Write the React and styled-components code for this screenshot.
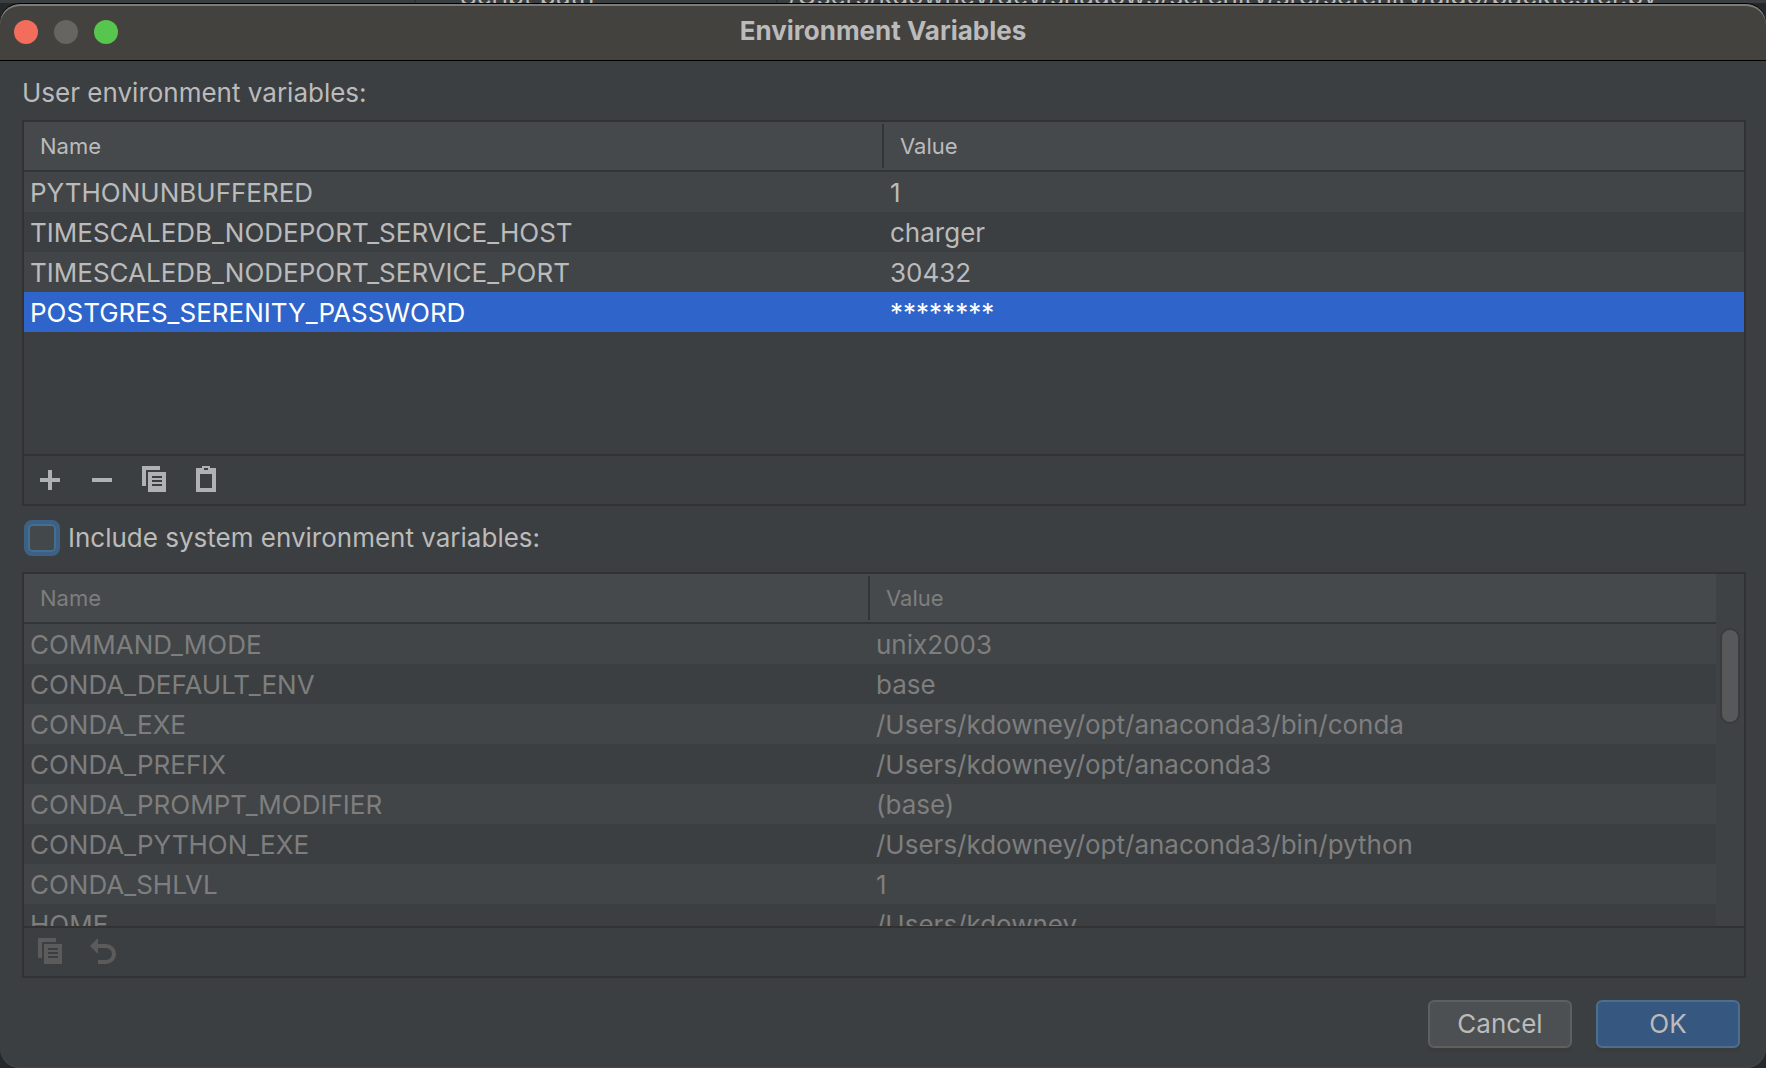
import React, { useState } from "react";
import styled, { createGlobalStyle, css } from "styled-components";

const GlobalStyle = createGlobalStyle`
  *, *::before, *::after { box-sizing: border-box; }
  html, body { margin: 0; background: #26292b; }
  body {
    font-family: Inter, "Liberation Sans", sans-serif;
    font-size: 26px;
    line-height: 40px;
    color: #bbbbbb;
    overflow: hidden;
  }
`;

const Screen = styled.div`
  height: 100vh;
  display: flex;
  flex-direction: column;
`;

const Backdrop = styled.div`
  flex: none;
  height: 3px;
  overflow: hidden;
  display: grid;
  grid-template-columns: 414px 46px 316px 1fr;
  align-content: end;
  background: #3a3e41;
`;

const BackdropCell = styled.span`
  line-height: 14px;
  padding-left: ${(p) => p.$indent || 0}px;
  border-left: ${(p) => (p.$ruled ? "2px solid #313335" : "none")};
  white-space: nowrap;
`;

const Dialog = styled.main`
  flex: 1;
  min-height: 0;
  display: flex;
  flex-direction: column;
  overflow: hidden;
  border-radius: 20px;
  border-top: 1px solid #000000;
  box-shadow: inset 0 -1px 0 #4c4648;
  background: #3c3f41;
`;

const TitleBar = styled.header`
  flex: none;
  height: 57px;
  display: grid;
  grid-template-columns: 1fr auto 1fr;
  align-items: center;
  padding: 0 14px;
  border-bottom: 1px solid #000000;
  border-radius: 20px 20px 0 0;
  box-shadow: inset 0 2px 0 #7b7c78;
  background: #43423f;
`;

const Lights = styled.div`
  display: flex;
  gap: 16px;
`;

const Light = styled.button`
  width: 24px;
  height: 24px;
  padding: 0;
  border: 0;
  border-radius: 50%;
  background: ${(p) => p.$color};
`;

const Title = styled.h1`
  margin: 0;
  padding-bottom: 2px;
  font-size: 26px;
  font-weight: 700;
  line-height: 40px;
`;

const Content = styled.div`
  flex: 1;
  min-height: 0;
  display: flex;
  flex-direction: column;
  padding: 12px 20px 20px 22px;
`;

const SectionLabel = styled.h2`
  margin: 0 0 7px;
  font-size: 26px;
  font-weight: 400;
  line-height: 40px;
`;

const Panel = styled.section`
  display: flex;
  flex-direction: column;
  border: 2px solid #323232;
  ${(p) =>
    p.$grow
      ? css`
          flex: 1;
          min-height: 0;
        `
      : css`
          flex: none;
        `}
  color: ${(p) => (p.$muted ? "#7e7e7e" : "#bbbbbb")};
`;

const TableArea = styled.div`
  display: flex;
  min-height: ${(p) => p.$minHeight || 0}px;
  flex: 1;
`;

const Scroller = styled.div`
  flex: 1;
  overflow-y: auto;
  scrollbar-width: none;
`;

const Table = styled.table`
  width: 100%;
  table-layout: fixed;
  border-collapse: separate;
  border-spacing: 0;
`;

const HeadCell = styled.th`
  position: sticky;
  top: 0;
  height: 50px;
  padding: 2px 0;
  border-bottom: 2px solid #313537;
  background: #45494b;
  font-size: 22px;
  font-weight: 400;
  line-height: 44px;
  text-align: left;
`;

const HeadText = styled.span`
  display: block;
  padding-left: 16px;
  border-right: ${(p) => (p.$divided ? "2px solid #313537" : "none")};
`;

const Row = styled.tr`
  background: ${(p) => (p.$selected ? "#2f65ca" : "#3c3f41")};
  color: ${(p) => (p.$selected ? "#ffffff" : "inherit")};

  &:nth-child(odd) {
    background: #414547;
  }
`;

const Cell = styled.td`
  height: 40px;
  padding: 2px 6px 0;
  line-height: 38px;
  white-space: nowrap;
  overflow: hidden;
`;

const Track = styled.div`
  flex: none;
  width: 28px;
  padding: 54px 4px 0;
  background: #3f4244;
`;

const Thumb = styled.div`
  height: 96px;
  border: 2px solid #393b3d;
  border-radius: 10px;
  background: #575859;
`;

const Toolbar = styled.div`
  flex: none;
  display: flex;
  align-items: center;
  gap: 20px;
  height: 50px;
  padding: 0 10px;
  border-top: 2px solid #323232;
`;

const ToolButton = styled.button`
  width: 32px;
  height: 32px;
  padding: 0;
  border: 0;
  background: none;
  color: #afb1b3;

  &:disabled {
    color: #5b5b5b;
  }

  svg {
    display: block;
  }
`;

const CheckRow = styled.label`
  flex: none;
  display: flex;
  align-items: center;
  gap: 8px;
  padding: 12px 2px 14px;
  align-self: flex-start;
`;

const CheckBox = styled.input`
  appearance: none;
  width: 36px;
  height: 36px;
  margin: 0;
  border: 4px solid #3d6185;
  border-radius: 8px;
  box-shadow: inset 0 0 0 2px #466d94;
  background: #43494a;

  &:checked {
    background: #43494a linear-gradient(#bbbbbb, #bbbbbb) center / 14px 14px no-repeat;
  }
`;

const Actions = styled.footer`
  flex: none;
  display: flex;
  justify-content: flex-end;
  gap: 24px;
  padding: 22px 6px 0;
`;

const ActionButton = styled.button`
  width: 144px;
  height: 48px;
  padding: 0;
  border: 2px solid ${(p) => (p.$primary ? "#4c708c" : "#5e6060")};
  border-radius: 6px;
  box-shadow: 0 4px 0 #393b3d;
  background: ${(p) => (p.$primary ? "#365880" : "#4c5052")};
  color: #bbbbbb;
  font: inherit;
`;

const AddIcon = () => (
  <svg width="32" height="32" viewBox="0 0 32 32" fill="currentColor" aria-hidden="true">
    <path d="M14 6h4v8h8v4h-8v8h-4v-8H6v-4h8z" />
  </svg>
);

const RemoveIcon = () => (
  <svg width="32" height="32" viewBox="0 0 32 32" fill="currentColor" aria-hidden="true">
    <path d="M6 14h20v4H6z" />
  </svg>
);

const CopyIcon = () => (
  <svg width="32" height="32" viewBox="0 0 32 32" fill="currentColor" fillRule="evenodd" aria-hidden="true">
    <path d="M4 2h18v4H8v16H4z" />
    <path d="M10 8h18v20H10zM14 12v2h10v-2zM14 16v2h10v-2zM14 20v2h10v-2z" />
  </svg>
);

const PasteIcon = () => (
  <svg width="32" height="32" viewBox="0 0 32 32" fill="currentColor" fillRule="evenodd" aria-hidden="true">
    <path d="M12 2h8v2h6v24H6V4h6zM14 4v2h4V4zM10 10v14h12V10z" />
  </svg>
);

const UndoIcon = () => (
  <svg width="32" height="32" viewBox="0 0 32 32" aria-hidden="true">
    <path d="M4 10l8-8v16z" fill="currentColor" />
    <path d="M12 10h8a8 8 0 0 1 0 16h-8" fill="none" stroke="currentColor" strokeWidth="4" />
  </svg>
);

const userVariables = [
  ["PYTHONUNBUFFERED", "1"],
  ["TIMESCALEDB_NODEPORT_SERVICE_HOST", "charger"],
  ["TIMESCALEDB_NODEPORT_SERVICE_PORT", "30432"],
  ["POSTGRES_SERENITY_PASSWORD", "********"],
];

const systemVariables = [
  ["COMMAND_MODE", "unix2003"],
  ["CONDA_DEFAULT_ENV", "base"],
  ["CONDA_EXE", "/Users/kdowney/opt/anaconda3/bin/conda"],
  ["CONDA_PREFIX", "/Users/kdowney/opt/anaconda3"],
  ["CONDA_PROMPT_MODIFIER", "(base)"],
  ["CONDA_PYTHON_EXE", "/Users/kdowney/opt/anaconda3/bin/python"],
  ["CONDA_SHLVL", "1"],
  ["HOME", "/Users/kdowney"],
];

function VariableTable({ label, rows, selected }) {
  return (
    <Scroller>
      <Table aria-label={label}>
        <thead>
          <tr>
            <HeadCell scope="col">
              <HeadText $divided>Name</HeadText>
            </HeadCell>
            <HeadCell scope="col">
              <HeadText>Value</HeadText>
            </HeadCell>
          </tr>
        </thead>
        <tbody>
          {rows.map(([name, value]) => (
            <Row key={name} $selected={name === selected}>
              <Cell>{name}</Cell>
              <Cell>{value}</Cell>
            </Row>
          ))}
        </tbody>
      </Table>
    </Scroller>
  );
}

export default function App() {
  const [includeSystem, setIncludeSystem] = useState(false);

  return (
    <Screen>
      <GlobalStyle />
      <Backdrop aria-hidden="true">
        <BackdropCell />
        <BackdropCell $ruled>&nbsp;</BackdropCell>
        <BackdropCell>Script path</BackdropCell>
        <BackdropCell $ruled $indent={10}>
          /Users/kdowney/dev/shadows/serenity/src/serenity/algo/backtester.py
        </BackdropCell>
      </Backdrop>
      <Dialog>
        <TitleBar>
          <Lights>
            <Light type="button" aria-label="Close" $color="#f36d5d" />
            <Light type="button" aria-label="Minimize" $color="#656562" />
            <Light type="button" aria-label="Zoom" $color="#57c64f" />
          </Lights>
          <Title>Environment Variables</Title>
        </TitleBar>
        <Content>
          <SectionLabel>User environment variables:</SectionLabel>
          <Panel>
            <TableArea $minHeight={332}>
              <VariableTable
                label="User environment variables"
                rows={userVariables}
                selected="POSTGRES_SERENITY_PASSWORD"
              />
            </TableArea>
            <Toolbar>
              <ToolButton type="button" aria-label="Add"><AddIcon /></ToolButton>
              <ToolButton type="button" aria-label="Remove"><RemoveIcon /></ToolButton>
              <ToolButton type="button" aria-label="Copy"><CopyIcon /></ToolButton>
              <ToolButton type="button" aria-label="Paste"><PasteIcon /></ToolButton>
            </Toolbar>
          </Panel>
          <CheckRow>
            <CheckBox
              type="checkbox"
              checked={includeSystem}
              onChange={(e) => setIncludeSystem(e.target.checked)}
            />
            Include system environment variables:
          </CheckRow>
          <Panel $grow $muted>
            <TableArea>
              <VariableTable label="System environment variables" rows={systemVariables} />
              <Track>
                <Thumb />
              </Track>
            </TableArea>
            <Toolbar>
              <ToolButton type="button" aria-label="Copy" disabled><CopyIcon /></ToolButton>
              <ToolButton type="button" aria-label="Revert" disabled><UndoIcon /></ToolButton>
            </Toolbar>
          </Panel>
          <Actions>
            <ActionButton type="button">Cancel</ActionButton>
            <ActionButton type="button" $primary>OK</ActionButton>
          </Actions>
        </Content>
      </Dialog>
    </Screen>
  );
}
